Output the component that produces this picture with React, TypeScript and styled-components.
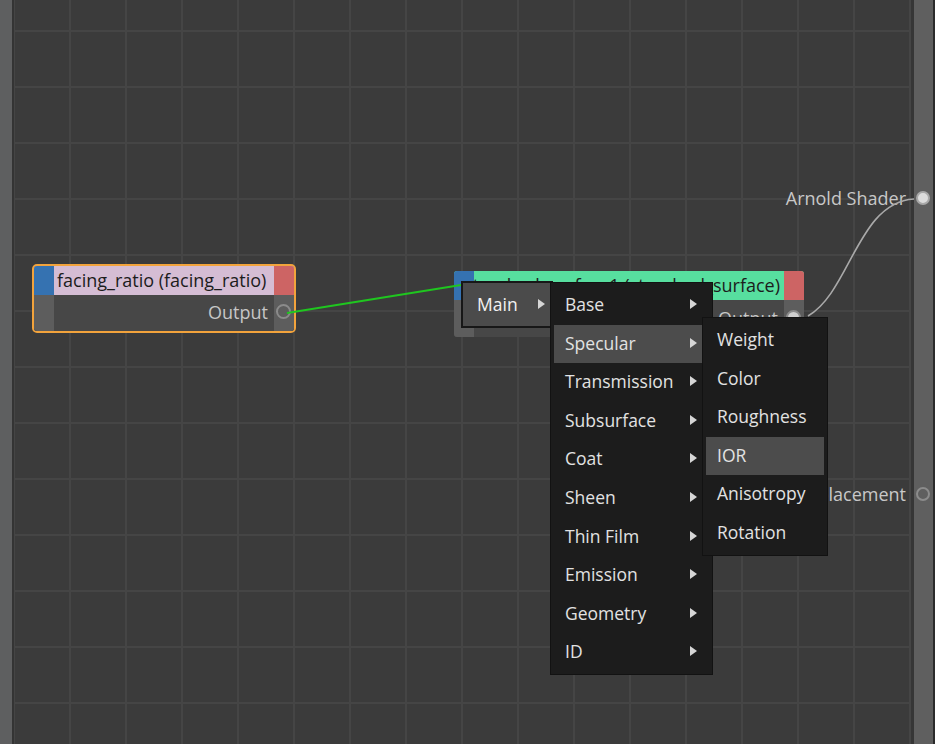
import React from "react";
import styled, { createGlobalStyle } from "styled-components";

const GlobalStyle = createGlobalStyle`
  html, body {
    margin: 0;
    padding: 0;
    background: #3b3b3b;
    font-family: "Open Sans", "Noto Sans", sans-serif;
  }
  * {
    box-sizing: border-box;
  }
`;

const Frame = styled.div`
  position: relative;
  display: flex;
  width: 935px;
  height: 744px;
  overflow: hidden;
`;

const SideBar = styled.div`
  width: 12px;
  background: #5e5f60;
`;

const Canvas = styled.div`
  width: 902px;
  border-left: 2px solid #343434;
  border-right: 3px solid #363636;
  background-color: #3b3b3b;
  background-image: linear-gradient(to right, #454545 2px, transparent 2px),
    linear-gradient(to bottom, #454545 2px, transparent 2px);
  background-size: 56px 56px;
  background-position: 55px 0, 0 30px;
`;

const Rail = styled.div`
  width: 19px;
  background: #5f5f5f;
`;

const RailEdge = styled.div`
  width: 2px;
  background: #2b2b2b;
`;

/* ---------- nodes ---------- */

const NodeBox = styled.div<{ $x: number; $y: number; $w: number; $selected?: boolean }>`
  position: absolute;
  left: ${(p) => p.$x}px;
  top: ${(p) => p.$y}px;
  width: ${(p) => p.$w}px;
  border: 2px solid ${(p) => (p.$selected ? "#f2a33c" : "transparent")};
  border-radius: 5px;
  overflow: hidden;
`;

const NodeHeader = styled.div<{ $color: string }>`
  display: grid;
  grid-template-columns: 20px 1fr 20px;
  height: 29px;
  background: ${(p) => p.$color};
`;

const HeaderCap = styled.div<{ $color: string }>`
  background: ${(p) => p.$color};
`;

const HeaderTitle = styled.div<{ $align?: "start" | "end" }>`
  display: flex;
  align-items: center;
  justify-content: ${(p) => (p.$align === "end" ? "flex-end" : "flex-start")};
  padding: 0 4px 1px 3px;
  overflow: hidden;
  white-space: nowrap;
  font-size: 18px;
  color: #1c1c1c;
`;

const NodeBody = styled.div<{ $h: number }>`
  display: grid;
  grid-template-columns: 20px 1fr 20px;
  height: ${(p) => p.$h}px;
  background: #474747;
`;

const BodyStrip = styled.div`
  position: relative;
  background: #5d5d5d;
`;

const OutLabel = styled.div`
  display: flex;
  align-items: center;
  justify-content: flex-end;
  padding: 0 6px 2px 0;
  font-size: 18px;
  color: #c6c6c6;
`;

const PortRing = styled.div<{ $filled?: boolean }>`
  position: absolute;
  left: 2px;
  top: 50%;
  width: 15px;
  height: 15px;
  margin-top: -9px;
  border-radius: 50%;
  border: 2px solid #8b8b8b;
  background: ${(p) => (p.$filled ? "#cfcfcf" : "transparent")};
`;

/* ---------- output ports on the rail ---------- */

const RailPort = styled.div<{ $y: number }>`
  position: absolute;
  right: 5px;
  top: ${(p) => p.$y}px;
  display: flex;
  align-items: center;
  gap: 10px;
  height: 24px;
`;

const RailLabel = styled.span`
  font-size: 18px;
  color: #c8c8c8;
`;

const RailDot = styled.span<{ $filled?: boolean }>`
  width: 14px;
  height: 14px;
  border-radius: 50%;
  border: 2px solid ${(p) => (p.$filled ? "#a8a8a8" : "#8c8c8c")};
  background: ${(p) => (p.$filled ? "#dcdcdc" : "transparent")};
`;

/* ---------- menus ---------- */

const Menu = styled.div<{ $x: number; $y: number; $w: number; $z: number }>`
  position: absolute;
  left: ${(p) => p.$x}px;
  top: ${(p) => p.$y}px;
  width: ${(p) => p.$w}px;
  z-index: ${(p) => p.$z};
  padding: 3px;
  background: #1c1c1c;
  border: 1px solid #121212;
`;

const RootMenu = styled.div`
  position: absolute;
  left: 461px;
  top: 281px;
  width: 92px;
  height: 47px;
  z-index: 5;
  border: 2px solid #171717;
  background: #4b4b4b;
  display: flex;
  align-items: center;
  justify-content: space-between;
  padding: 0 6px 2px 14px;
  font-size: 17.5px;
  color: #f2f2f2;
`;

const MenuItem = styled.div<{ $active?: boolean; $padRight: number }>`
  display: flex;
  align-items: center;
  justify-content: space-between;
  height: 38.55px;
  padding: 0 ${(p) => p.$padRight}px 2px 11px;
  background: ${(p) => (p.$active ? "#4c4c4c" : "transparent")};
  font-size: 17.5px;
  color: #e2e2e2;
  white-space: nowrap;
`;

const Arrow = styled.span`
  width: 0;
  height: 0;
  border-left: 7px solid #d6d6d6;
  border-top: 5px solid transparent;
  border-bottom: 5px solid transparent;
`;

const Wires = styled.svg`
  position: absolute;
  left: 0;
  top: 0;
  width: 935px;
  height: 744px;
  pointer-events: none;
  z-index: 2;
`;

const sections = [
  "Base",
  "Specular",
  "Transmission",
  "Subsurface",
  "Coat",
  "Sheen",
  "Thin Film",
  "Emission",
  "Geometry",
  "ID",
];

const specularAttrs = ["Weight", "Color", "Roughness", "IOR", "Anisotropy", "Rotation"];

export default function App() {
  return (
    <>
      <GlobalStyle />
      <Frame>
        <SideBar />
        <Canvas />
        <Rail />
        <RailEdge />

        <RailPort $y={186}>
          <RailLabel>Arnold Shader</RailLabel>
          <RailDot $filled />
        </RailPort>
        <RailPort $y={482}>
          <RailLabel>Displacement</RailLabel>
          <RailDot />
        </RailPort>

        <NodeBox $x={32} $y={264} $w={264} $selected>
          <NodeHeader $color="#d5bdd4">
            <HeaderCap $color="#3572b1" />
            <HeaderTitle>facing_ratio (facing_ratio)</HeaderTitle>
            <HeaderCap $color="#cd6464" />
          </NodeHeader>
          <NodeBody $h={36}>
            <BodyStrip />
            <OutLabel>Output</OutLabel>
            <BodyStrip>
              <PortRing />
            </BodyStrip>
          </NodeBody>
        </NodeBox>

        <NodeBox $x={452} $y={269} $w={354}>
          <NodeHeader $color="#57df9f">
            <HeaderCap $color="#3572b1" />
            <HeaderTitle $align="end">standard_surface1 (standard_surface)</HeaderTitle>
            <HeaderCap $color="#cd6464" />
          </NodeHeader>
          <NodeBody $h={37}>
            <BodyStrip />
            <OutLabel>Output</OutLabel>
            <BodyStrip>
              <PortRing $filled />
            </BodyStrip>
          </NodeBody>
        </NodeBox>

        <Wires viewBox="0 0 935 744">
          <line x1="287" y1="313" x2="461" y2="285" stroke="#1fc61f" strokeWidth="2" />
          <path
            d="M 808 316 C 850 292, 858 202, 914 199"
            fill="none"
            stroke="#a9a9a9"
            strokeWidth="1.6"
          />
        </Wires>

        <RootMenu>
          <span>Main</span>
          <Arrow />
        </RootMenu>

        <Menu $x={550} $y={282} $w={163} $z={6}>
          {sections.map((s) => (
            <MenuItem key={s} $active={s === "Specular"} $padRight={12}>
              <span>{s}</span>
              <Arrow />
            </MenuItem>
          ))}
        </Menu>

        <Menu $x={702} $y={317} $w={126} $z={7}>
          {specularAttrs.map((s) => (
            <MenuItem key={s} $active={s === "IOR"} $padRight={8}>
              <span>{s}</span>
            </MenuItem>
          ))}
        </Menu>
      </Frame>
    </>
  );
}
